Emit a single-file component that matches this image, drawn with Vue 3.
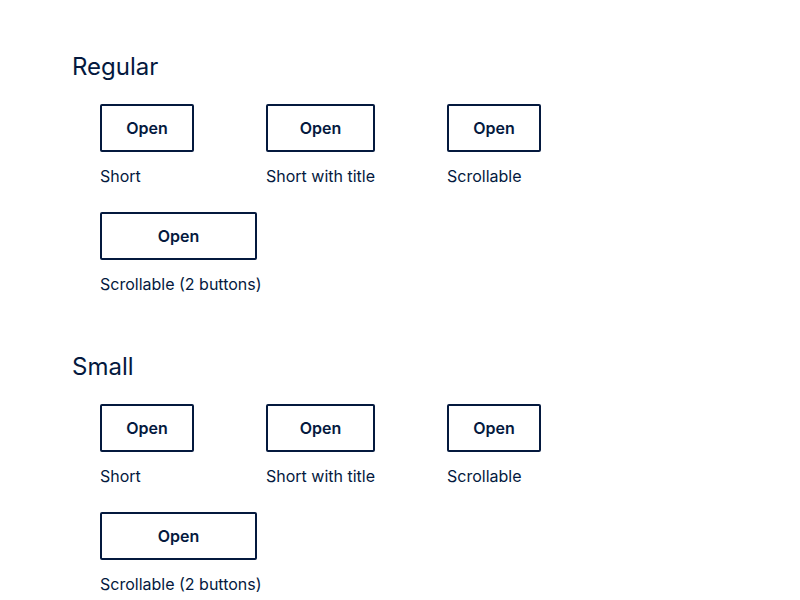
<script setup>
const sections = ['Regular', 'Small']
const examples = ['Short', 'Short with title', 'Scrollable', 'Scrollable (2 buttons)']
</script>

<template>
  <main class="page">
    <section v-for="section in sections" :key="section" class="section">
      <h2 class="heading">{{ section }}</h2>
      <div class="examples">
        <div v-for="(example, index) in examples" :key="example" class="example">
          <button
            type="button"
            class="button"
            :aria-describedby="`${section}-${index}`"
          >Open</button>
          <span :id="`${section}-${index}`" class="caption">{{ example }}</span>
        </div>
      </div>
    </section>
  </main>
</template>

<style>
body {
  background: #fff;
}
</style>

<style scoped>
.page {
  display: flex;
  flex-direction: column;
  gap: 55px;
  padding: 51px 72px 0;
  color: #04193e;
  font-family: Inter, sans-serif;
  font-size: 16px;
  line-height: 24px;
}

.heading {
  margin: 0 0 21px;
  font-size: 24px;
  font-weight: 400;
  line-height: 32px;
}

.examples {
  display: flex;
  flex-wrap: wrap;
  gap: 24px 72px;
  padding-left: 28px;
}

.example {
  display: flex;
  flex-direction: column;
  gap: 12px;
  max-width: 157px;
}

.caption {
  white-space: nowrap;
}

.button {
  min-width: 94px;
  height: 48px;
  padding: 0 24px;
  border: 2px solid #04193e;
  border-radius: 2px;
  background: #fff;
  color: inherit;
  font: inherit;
  font-weight: 600;
  cursor: pointer;
}
</style>
